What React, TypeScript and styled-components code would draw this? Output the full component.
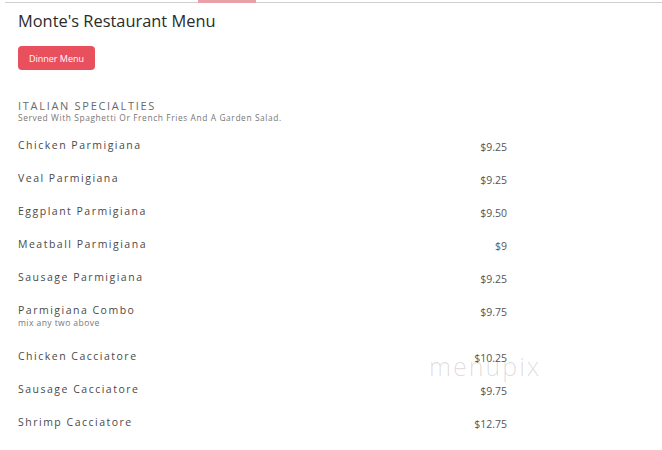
import React from "react";
import styled, { createGlobalStyle } from "styled-components";

const Global = createGlobalStyle`
body {
    margin: 0;
    background: #fff;
    font-family: "Open Sans", "Liberation Sans", sans-serif;
}
`;

const Page = styled.div`
position: relative;
width: 662px;
height: 450px;
overflow: hidden;
background: #fff;
`;

const TopBar = styled.div`
display: flex;
height: 3px;
margin-left: 5px;
border-bottom: 1px solid #d0d0d0;
box-sizing: border-box;
`;

const TabMark = styled.div`
margin-left: 193px;
width: 58px;
height: 3px;
background: #e9a0a6;
`;

const Body = styled.div`
padding: 8px 0 0 18px;
`;

const Title = styled.h1`
margin: 0;
font-size: 16.4px;
font-weight: 400;
color: #2b2b2b;
line-height: 20px;
`;

const MenuButton = styled.button`
margin-top: 15px;
width: 77px;
height: 24px;
border: none;
border-radius: 4px;
background: #e8505e;
color: #fff;
font-family: inherit;
font-size: 9px;
padding: 0;
`;

const SectionHead = styled.div`
margin-top: 29px;
font-size: 11px;
letter-spacing: 1.7px;
color: #6a6a6a;
line-height: 14px;
`;

const SectionNote = styled.div`
font-size: 8.4px;
letter-spacing: 0.6px;
color: #777;
line-height: 10px;
`;

const List = styled.div`
width: 489px;
margin-top: 15px;
display: flex;
flex-direction: column;
`;

const Row = styled.div`
display: flex;
justify-content: space-between;
align-items: flex-start;
min-height: 33px;
`;

const Name = styled.div`
font-size: 10.5px;
letter-spacing: 1.5px;
color: #4a4a4a;
line-height: 14px;
`;

const Note = styled.div`
font-size: 8.6px;
letter-spacing: 0.4px;
color: #777;
line-height: 10px;
margin: 1px 0 21px;
`;

const Price = styled.div`
font-size: 10.5px;
color: #555;
line-height: 14px;
padding-top: 2px;
`;

const Watermark = styled.div`
position: absolute;
left: 429px;
top: 349px;
font-size: 25px;
font-weight: 300;
letter-spacing: 2px;
color: rgba(0, 0, 0, 0.14);
pointer-events: none;
`;

type Item = { name: string; price: string; note?: string };

const items: Item[] = [
    { name: "Chicken Parmigiana", price: "$9.25" },
    { name: "Veal Parmigiana", price: "$9.25" },
    { name: "Eggplant Parmigiana", price: "$9.50" },
    { name: "Meatball Parmigiana", price: "$9" },
    { name: "Sausage Parmigiana", price: "$9.25" },
    { name: "Parmigiana Combo", price: "$9.75", note: "mix any two above" },
    { name: "Chicken Cacciatore", price: "$10.25" },
    { name: "Sausage Cacciatore", price: "$9.75" },
    { name: "Shrimp Cacciatore", price: "$12.75" },
];

export default function App() {
    return <Page>
        <Global />
        <TopBar><TabMark /></TopBar>
        <Body>
            <Title>Monte's Restaurant Menu</Title>
            <MenuButton>Dinner Menu</MenuButton>
            <SectionHead>ITALIAN SPECIALTIES</SectionHead>
            <SectionNote>Served With Spaghetti Or French Fries And A Garden Salad.</SectionNote>
            <List>
                {items.map((it) => <Row key={it.name}>
                    <div>
                        <Name>{it.name}</Name>
                        {it.note && <Note>{it.note}</Note>}
                    </div>
                    <Price>{it.price}</Price>
                </Row>)}
            </List>
        </Body>
        <Watermark>menupix</Watermark>
    </Page>;
}
